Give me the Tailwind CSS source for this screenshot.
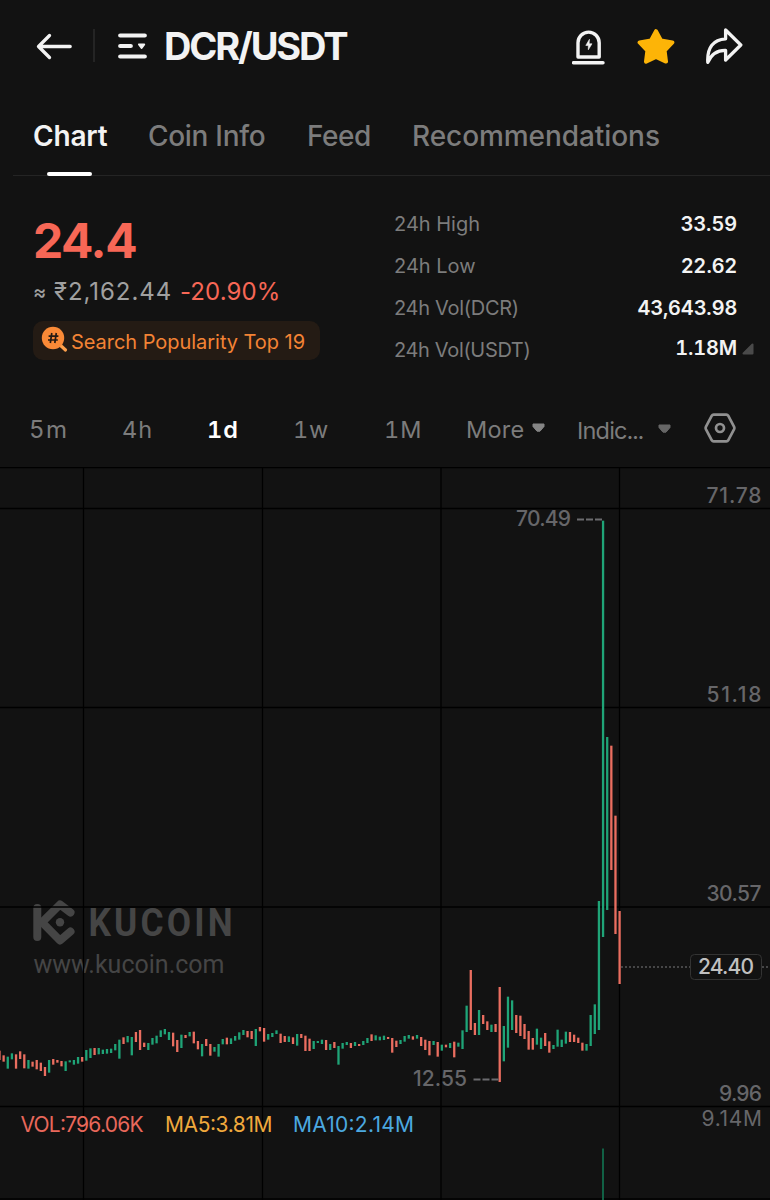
<!DOCTYPE html>
<html lang="en">
<head>
<meta charset="utf-8">
<title>DCR/USDT</title>
<script src="https://cdn.jsdelivr.net/npm/@tailwindcss/browser@4"></script>
</head>
<body class="bg-[#121212]">
<div class="w-[770px] h-[1200px] overflow-hidden bg-[#121212] font-['Inter','Noto_Sans',sans-serif] text-[#f3f3f3] flex flex-col">

  <header class="h-[93px] shrink-0 flex items-center pl-[36px] pr-[27px] pb-[2px]">
    <svg class="w-9 h-7 shrink-0" viewBox="0 0 36 28" fill="none" stroke="#f3f3f3" stroke-width="3.300" stroke-linecap="round" stroke-linejoin="round"><path d="M34.200 14.500H2.500M13.500 3.500 2.500 14.500l11 11"/></svg>
    <div class="w-[2px] h-[33px] bg-[#242424] ml-[21px]"></div>
    <svg class="w-[30px] h-[27px] ml-[23px] mt-[2px] shrink-0" viewBox="0 0 30 27" fill="none" stroke="#f3f3f3" stroke-width="4.200" stroke-linecap="round"><path d="M2.200 2.500H26.800M2.200 13H12.800M2.200 23.500H26.800"/><path d="M21 11.400h5.200l-2.600 3.600z" fill="#f3f3f3" stroke-width="2" stroke-linejoin="round"/></svg>
    <h1 class="ml-[16px] text-[38px] leading-none font-bold tracking-[-2.150px] whitespace-nowrap">DCR/USDT</h1>
    <div class="ml-auto flex items-center">
      <svg class="w-[34px] h-[36px] mt-[3px]" viewBox="0 0 34 36" fill="none" stroke="#f3f3f3" stroke-width="3.400" stroke-linejoin="round" stroke-linecap="round"><path d="M6 28V13.700a10.600 10.600 0 0 1 21.200 0V28z"/><path d="M1.500 33.800H31"/><path d="M17.300 10.600 13.800 16.400h2.500v4.400l3.700-6h-2.700z" fill="#f3f3f3" stroke-width=".6"/></svg>
      <svg class="w-[38px] h-[37px] ml-[31px] mt-[2px]" viewBox="0 0 38 37"><path d="M19 3.200 24 12.400 35.400 14.400 27.600 22.600 29 33.600 19 29 9 33.600 10.400 22.600 2.600 14.400 14 12.400z" fill="#fdb407" stroke="#fdb407" stroke-width="4" stroke-linejoin="round"/></svg>
      <svg class="w-[38px] h-[38px] ml-[30px]" viewBox="0 0 38 38" fill="none" stroke="#f3f3f3" stroke-width="3.300" stroke-linejoin="round" stroke-linecap="round"><path d="M20.600 3 35.800 18 20.600 33V23.400C12 23.200 6.600 26.600 2.800 35.400 1.900 20.500 8.500 12.400 20.600 11.800z"/></svg>
    </div>
  </header>

  <nav class="h-[83px] shrink-0 flex flex-col">
    <div class="flex-1 flex items-start pl-[33px] pt-[25px] text-[28px] leading-[36px] font-medium text-[#7c7c7c] whitespace-nowrap">
      <a class="relative w-[115px] text-[#f3f3f3] font-semibold tracking-[-0.200px]">Chart<i class="absolute left-[14px] top-[54px] w-[45px] h-[4px] rounded-sm bg-white"></i></a>
      <a class="w-[159px] tracking-[-0.300px]">Coin Info</a>
      <a class="w-[105px] tracking-[-0.500px]">Feed</a>
      <a class="tracking-[-0.070px]">Recommendations</a>
    </div>
    <div class="h-px ml-[13px] bg-[#242424]"></div>
  </nav>

  <section class="h-[215px] shrink-0 flex">
    <div class="pl-[33px] pt-[39px] w-[394px]">
      <div class="text-[48px] leading-[52px] font-bold text-[#f76756] tracking-[-1.400px]">24.4</div>
      <div class="mt-[9px] text-[24px] leading-[32px] flex items-center whitespace-nowrap"><span class="w-[21px] text-[20px] font-medium text-[#a0a0a0]">≈</span><span class="w-[126px] text-[#a0a0a0] tracking-[0.950px]">₹2,162.44</span><span class="text-[#f76756] tracking-[0.100px]">-20.90%</span></div>
      <div class="mt-[13px] w-[287px] h-[39px] rounded-[10px] bg-[#241b14] flex items-center pl-[8px] text-[#f38335]">
        <svg class="w-[27px] h-[27px] mt-[-3px]" viewBox="0 0 27 27"><path d="m18 18 6.500 6" stroke="#fda04c" stroke-width="3.200" stroke-linecap="round"/><circle cx="12" cy="12" r="11.200" fill="#fa8a37"/><path d="M10.800 7 9.300 17M15.300 7l-1.500 10M7.600 10.200h9.800M7 14h9.800" stroke="#241b14" stroke-width="1.700" fill="none"/></svg>
        <span class="ml-[3px] text-[20px] leading-none mt-[3px] whitespace-nowrap tracking-[-0.040px]">Search Popularity Top 19</span>
      </div>
    </div>
    <dl class="w-[343px] pt-[27px] text-[20px] leading-[42px] text-[#7c7c7c] whitespace-nowrap">
      <div class="flex justify-between"><dt>24h High</dt><dd class="text-[#f3f3f3] font-semibold">33.59</dd></div>
      <div class="flex justify-between"><dt>24h Low</dt><dd class="text-[#f3f3f3] font-semibold">22.62</dd></div>
      <div class="flex justify-between"><dt class="tracking-[-0.300px]">24h Vol(DCR)</dt><dd class="text-[#f3f3f3] font-semibold tracking-[-0.200px]">43,643.98</dd></div>
      <div class="flex justify-between"><dt class="tracking-[-0.350px]">24h Vol(USDT)</dt><dd class="text-[#f3f3f3] font-semibold tabular-nums leading-[39px] tracking-[-0.200px]">1.18M</dd></div>
    </dl>
    <svg class="w-[12px] h-[12px] mt-[167px] ml-[5px]" viewBox="0 0 12 12"><path d="M10.500 1.500v9h-9z" fill="#4a4a4a" stroke="#4a4a4a" stroke-width="2" stroke-linejoin="round"/></svg>
  </section>

  <div class="h-[76px] shrink-0 flex items-start pt-[23px] pl-[29px] text-[23.500px] leading-[32px] text-[#7c7c7c] whitespace-nowrap tabular-nums">
    <div class="w-[93px] text-[24px] tracking-[1.500px]">5m</div>
    <div class="w-[85px] tracking-[1px]">4h</div>
    <div class="w-[86px] text-white font-semibold tracking-[1px]">1d</div>
    <div class="w-[91px] tracking-[0.700px]">1w</div>
    <div class="w-[82px] tracking-[1px]">1M</div>
    <div class="w-[111px] flex items-center"><span class="w-[58px] tracking-[0.200px]">More</span><svg class="ml-[8px] w-[13px] h-[10px] mt-[-4px]" viewBox="0 0 13 10"><path d="M1 1h11v2.500L8 8.200H5L1 3.500z" fill="#858585" stroke="#858585" stroke-linejoin="round"/></svg></div>
    <div class="w-[127px] flex items-center"><span class="w-[81px] pt-px tracking-[-0.800px]">Indic...</span><svg class="w-[13px] h-[10px] mt-[-4px]" viewBox="0 0 13 10"><path d="M1 1h11v2.500L8 8.200H5L1 3.500z" fill="#666" stroke="#666" stroke-linejoin="round"/></svg></div>
    <svg class="w-[32px] h-[30px] mt-[-1px]" viewBox="0 0 32 30" fill="none" stroke="#909090" stroke-width="2.700" stroke-linejoin="round"><path d="M9.600 1.700H22.400Q23.600 1.700 24.200 2.700L30 13.600Q30.700 15 30 16.400L24.200 27.300Q23.600 28.300 22.400 28.300H9.600Q8.400 28.300 7.800 27.300L2 16.400Q1.300 15 2 13.600L7.800 2.700Q8.400 1.700 9.600 1.700z"/><circle cx="16" cy="15" r="4"/></svg>
  </div>

  <svg id="chart" class="w-[770px] h-[733px] shrink-0" viewBox="0 467 770 733" font-size="21" fill="#6b6b6e">
    <g fill="#454545" stroke="#454545">
      <path d="M37.300 908V937" stroke-width="8" stroke-linecap="round" fill="none"/>
      <path d="M70.500 912.500 60 904.500 42 922.300 60 940.500 70.500 931.500" stroke-width="8" stroke-linecap="round" stroke-linejoin="round" fill="none"/>
      <circle cx="60" cy="922.300" r="4.200" stroke="none"/>
      <text transform="translate(88.500 935.700) scale(.93 1)" font-family="Roboto, sans-serif" font-weight="700" font-size="38" textLength="155" stroke="none">KUCOIN</text>
      <text x="33.500" y="972.500" font-family="Roboto, sans-serif" font-size="25" textLength="191" stroke="none">www.kucoin.com</text>
    </g>
    <path d="M0 467.500H770M0 508.500H770M0 707.500H770M0 907H770M0 1106.500H770M0 1199H770M83.500 467V1200M262.500 467V1200M441 467V1200M619.500 467V1200" stroke="#000" stroke-width="1.300"/>
    <g id="bars"></g>
    <path d="M603 1148.500V1200" stroke="#126b4c" stroke-width="1.800"/>
    <path d="M621 967H690M762 967H770" stroke="#58585a" stroke-width="1.400" stroke-dasharray="2 2"/>
    <rect x="690.500" y="954.500" width="71" height="25" rx="4" fill="#121212" stroke="#333"/>
    <g font-weight="500" fill="#666669">
      <text x="706.500" y="502.500" textLength="55">71.78</text>
      <text x="706.500" y="701.500" textLength="55">51.18</text>
      <text x="706.500" y="901" textLength="55">30.57</text>
      <text x="719" y="1101" textLength="43">9.96</text>
      <text x="701.500" y="1125.500" textLength="60.500" font-weight="400">9.14M</text>
      <text x="698" y="973.500" textLength="56" fill="#c0c0c0">24.40</text>
      <text x="516" y="525.500" textLength="55">70.49</text>
      <text x="413" y="1085.500" textLength="54">12.55</text>
    </g>
    <path d="M577 519.500H602M473.500 1079.500H499" stroke="#6b6b6e" stroke-width="1.800" stroke-dasharray="7 2"/>
    <text x="20.500" y="1131.500" textLength="123" fill="#e9685b">VOL:796.06K</text>
    <text x="165" y="1131.500" textLength="107.500" fill="#f0a93d">MA5:3.81M</text>
    <text x="293" y="1131.500" textLength="121" fill="#4ca9e0">MA10:2.14M</text>
  </svg>
</div>
<script>
// Daily ranges, oldest first: r/g for direction, then high:low in thirds of a pixel below y=1000.
const ranges = `r152:180 r166:185 g170:206 g160:178 r163:206 r154:177 r163:205 g180:206 r185:200 r180:208
r188:213 r201:228 g180:218 r177:194 r180:188 r183:199 g184:213 g181:187 g180:194 g171:191
r171:185 g150:182 g145:174 r144:165 g144:163 g149:162 g147:161 g146:159 g132:151 g119:176
r112:132 g108:127 g111:166 r96:126 r90:150 r128:141 g129:150 g114:134 g107:130 g91:111
g87:103 g96:120 r98:139 r120:156 g104:144 r105:114 g96:109 r95:130 r123:148 g132:169
r117:138 r132:167 g141:155 g132:170 g117:133 r113:133 g115:132 g108:122 g97:119 g90:105
r93:112 r93:117 g87:138 r81:94 r84:125 g102:119 g99:111 g91:102 r101:129 r108:126
g109:126 r112:132 g102:137 r102:114 r107:153 r116:153 g123:147 g123:129 g119:132 r120:150
g132:150 r126:144 g138:194 g129:146 g126:135 r129:144 g126:138 r132:138 g123:135 g114:129
r103:123 g106:121 g110:121 g107:120 r111:117 r114:158 r122:141 g120:132 g108:125 g105:116
r109:119 g105:116 r111:138 r119:150 r123:166 g123:135 r126:170 g134:152 r134:142 g129:144
r125:172 g128:140 g91:147 g17:96 r-90:90 r69:105 g30:105 r45:72 r64:90 g74:96
r72:96 r-39:246 g78:184 g-10:143 g1:90 r45:99 r47:108 r72:117 r93:149 r114:149
g86:134 g113:147 r99:138 r124:158 g135:147 g89:140 g119:141 g95:131 r96:126 r104:126
r113:129 r128:152 g132:152 g45:138 g13:102 g-297:90 g-1438:-189 g-789:-270 r-763:-390 r-553:-198
r-267:-48`;
const SVG = 'http://www.w3.org/2000/svg';
const bars = document.getElementById('bars');
ranges.split(/\s+/).forEach((t, i) => {
  const [hi, lo] = t.slice(1).split(':').map(Number);
  const r = document.createElementNS(SVG, 'rect');
  r.setAttribute('x', (-0.5 + 4.134 * i - 1.15).toFixed(2));
  r.setAttribute('y', (1000 + hi / 3).toFixed(2));
  r.setAttribute('width', 2.3);
  r.setAttribute('height', ((lo - hi) / 3).toFixed(2));
  r.setAttribute('fill', t[0] === 'r' ? '#ea6e60' : '#1fa477');
  bars.appendChild(r);
});
</script>
</body>
</html>
